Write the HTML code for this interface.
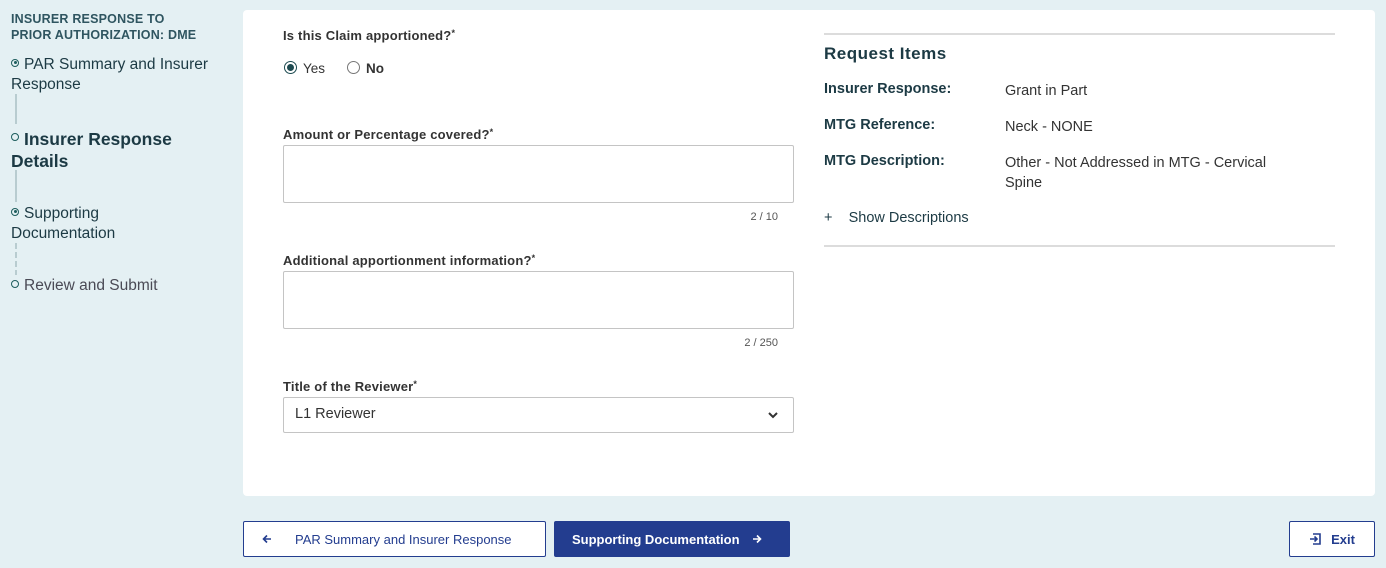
<!DOCTYPE html>
<html><head><meta charset="utf-8"><style>
*{box-sizing:border-box;margin:0;padding:0}
body{width:1386px;height:568px;background:#e4f0f3;font-family:"Liberation Sans",sans-serif;position:relative;overflow:hidden;color:#2b2b2b}
.a{position:absolute}
.hdr{left:11px;top:11px;font-size:12.5px;font-weight:bold;color:#2f5560;line-height:16px;letter-spacing:0.2px}
.step{left:11px;font-size:15.5px;line-height:20px;color:#1c3a44}
.dot{display:inline-block;width:8px;height:8px;border:1px solid #1d5d5d;border-radius:50%;position:relative;vertical-align:middle;margin-right:5px;top:-2px}
.dot.f::after{content:"";position:absolute;left:1.5px;top:1.5px;width:3px;height:3px;border-radius:50%;background:#1d5d5d}
.vl{left:15px;width:2px;background:#b8ccd0}
.card{left:243px;top:10px;width:1132px;height:486px;background:#fff;border-radius:4px}
.lbl{font-size:13px;font-weight:bold;color:#333;letter-spacing:0.2px}
.box{border:1px solid #c4c4c4;border-radius:2px;left:283px;width:511px;background:#fff}
.cnt{font-size:11px;color:#555;text-align:right}
.k{left:824px;font-size:14.5px;font-weight:bold;color:#1c3a44}
.v{left:1005px;font-size:14.5px;color:#333;line-height:20px}
.btn{height:36px;border:1px solid #233d8f;border-radius:2px;font-size:13px;display:flex;align-items:center;color:#233d8f;background:#fff}
</style></head><body>
<div class="a hdr">INSURER RESPONSE TO<br>PRIOR AUTHORIZATION: DME</div>
<div class="a step" style="top:55px"><span class="dot f"></span>PAR Summary and Insurer<br>Response</div>
<div class="a vl" style="top:94px;height:30px"></div>
<div class="a step" style="top:128px;font-size:17.5px;font-weight:bold;line-height:22px"><span class="dot" style="top:-3px"></span>Insurer Response<br>Details</div>
<div class="a vl" style="top:170px;height:32px"></div>
<div class="a step" style="top:204px"><span class="dot f"></span>Supporting<br>Documentation</div>
<div class="a vl" style="top:243px;height:32px;background:repeating-linear-gradient(#b8ccd0 0 6px,transparent 6px 9px)"></div>
<div class="a step" style="top:276px;color:#4a4a55"><span class="dot"></span>Review and Submit</div>

<div class="a card"></div>
<div class="a lbl" style="left:283px;top:28px">Is this Claim apportioned?<span style="font-size:9px;vertical-align:top">*</span></div>
<div class="a" style="left:284px;top:61px;width:13px;height:13px;border:1px solid #1d4a50;border-radius:50%"><div style="margin:2px;width:7px;height:7px;border-radius:50%;background:#1d4a50"></div></div>
<div class="a" style="left:303px;top:61px;font-size:13.5px;color:#333">Yes</div>
<div class="a" style="left:347px;top:61px;width:13px;height:13px;border:1px solid #777;border-radius:50%"></div>
<div class="a" style="left:366px;top:61px;font-size:13.5px;font-weight:bold;color:#333">No</div>
<div class="a lbl" style="left:283px;top:127px">Amount or Percentage covered?<span style="font-size:9px;vertical-align:top">*</span></div>
<div class="a box" style="top:145px;height:58px"></div>
<div class="a cnt" style="left:700px;width:78px;top:211px">2 / 10</div>
<div class="a lbl" style="left:283px;top:253px">Additional apportionment information?<span style="font-size:9px;vertical-align:top">*</span></div>
<div class="a box" style="top:271px;height:58px"></div>
<div class="a cnt" style="left:700px;width:78px;top:337px">2 / 250</div>
<div class="a lbl" style="left:283px;top:379px">Title of the Reviewer<span style="font-size:9px;vertical-align:top">*</span></div>
<div class="a box" style="top:397px;height:36px;padding:8px 11px;font-size:14.5px;color:#333">L1 Reviewer
<svg style="position:absolute;right:15px;top:13px" width="10" height="8" viewBox="0 0 10 8"><path d="M1 2l4 4 4-4" stroke="#333" stroke-width="2" fill="none"/></svg></div>

<div class="a" style="left:824px;top:33px;width:511px;height:2px;background:#dcdcdc"></div>
<div class="a" style="left:824px;top:44px;font-size:17px;font-weight:bold;color:#1c3a44;letter-spacing:0.5px">Request Items</div>
<div class="a k" style="top:81px">Insurer Response:</div><div class="a v" style="top:81px">Grant in Part</div>
<div class="a k" style="top:117px">MTG Reference:</div><div class="a v" style="top:117px">Neck - NONE</div>
<div class="a k" style="top:153px">MTG Description:</div><div class="a v" style="top:153px;width:300px">Other - Not Addressed in MTG - Cervical Spine</div>
<div class="a" style="left:824px;top:210px;font-size:14.5px;color:#1c3a44">+&nbsp;&nbsp;&nbsp;&nbsp;Show Descriptions</div>
<div class="a" style="left:824px;top:245px;width:511px;height:2px;background:#dcdcdc"></div>

<div class="a btn" style="left:243px;top:521px;width:303px;padding-left:18px"><svg width="10" height="10" viewBox="0 0 10 10" style="margin-right:23px"><path d="M9 5H1.5M5 1.5L1.5 5 5 8.5" stroke="#233d8f" stroke-width="1.6" fill="none"/></svg>PAR Summary and Insurer Response</div>
<div class="a btn" style="left:554px;top:521px;width:236px;background:#233d8f;color:#fff;font-weight:bold;padding-left:17px">Supporting Documentation<svg width="10" height="10" viewBox="0 0 10 10" style="margin-left:12px"><path d="M1 5h7.5M5 1.5L8.5 5 5 8.5" stroke="#fff" stroke-width="1.6" fill="none"/></svg></div>
<div class="a btn" style="left:1289px;top:521px;width:86px;font-weight:bold;justify-content:center"><svg width="12" height="12" viewBox="0 0 12 12" style="margin-right:10px"><path d="M4 1h7v10H4M1 6h7M5.5 3.5L8 6 5.5 8.5" stroke="#233d8f" stroke-width="1.6" fill="none"/></svg>Exit</div>
</body></html>
